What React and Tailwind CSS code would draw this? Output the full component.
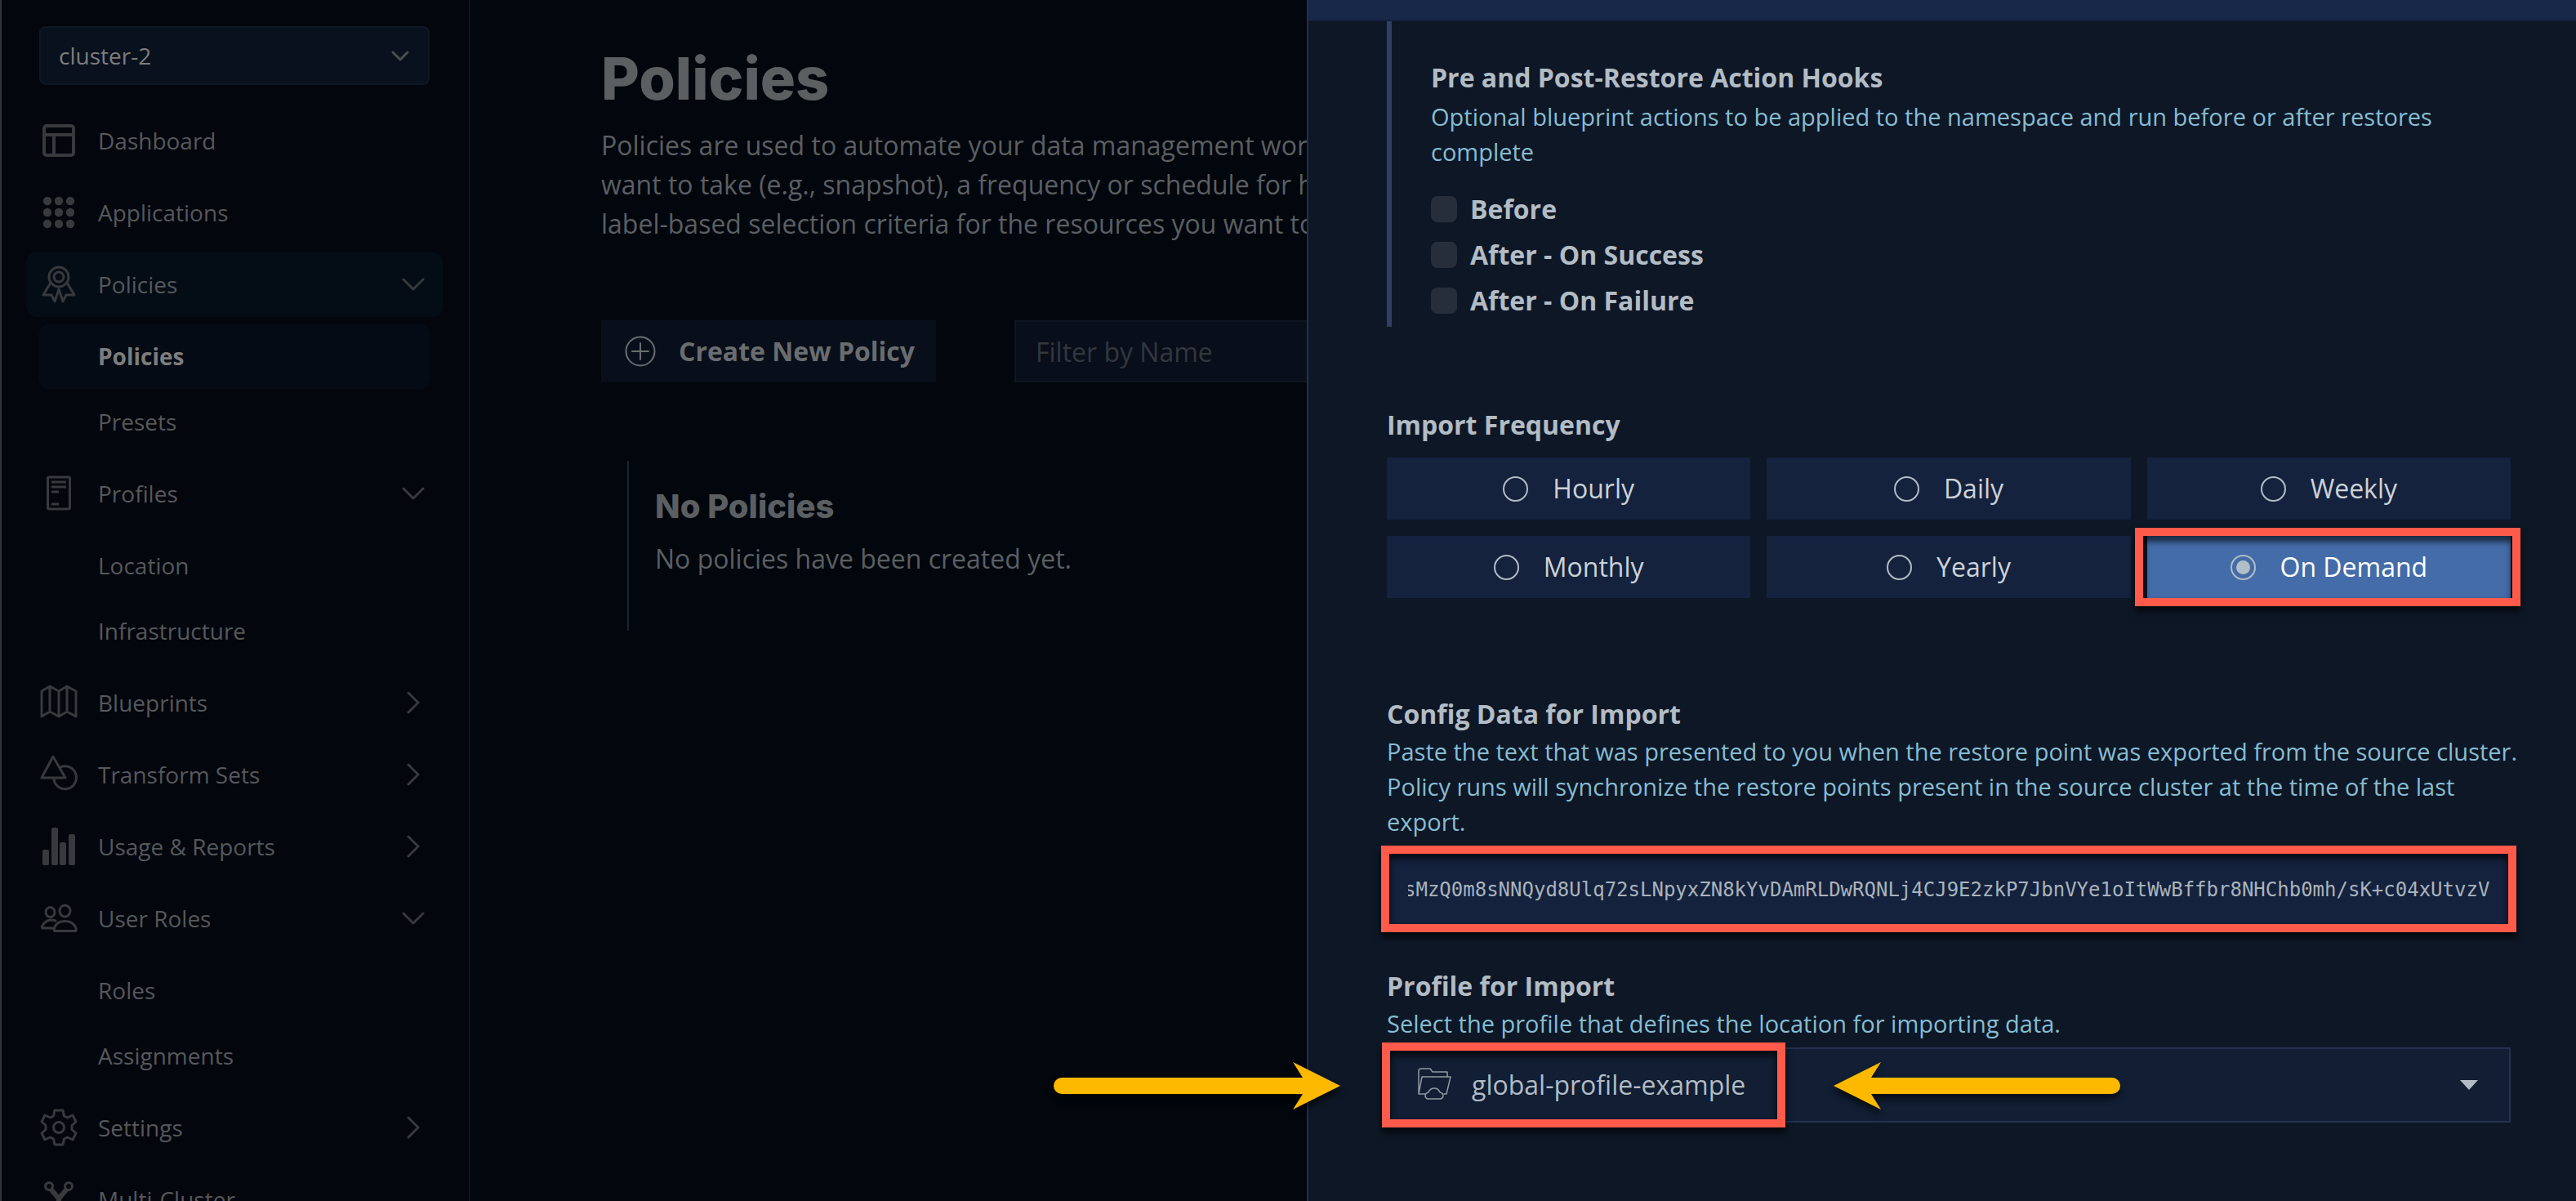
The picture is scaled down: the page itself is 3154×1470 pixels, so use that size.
import React, { useEffect, useRef } from "react";

const stroke = { fill: "none", stroke: "currentColor", strokeLinejoin: "round", strokeLinecap: "round" };

function Icon({ children, width = 3 }) {
  return (
    <svg viewBox="0 0 48 48" className="size-12 shrink-0" aria-hidden="true" {...stroke} strokeWidth={width}>
      {children}
    </svg>
  );
}

const DashboardIcon = () => (
  <Icon width={4}>
    <rect x="6" y="6" width="36" height="36" rx="3" />
    <path d="M6 17h36M18 17v25" />
  </Icon>
);

const AppsIcon = () => (
  <Icon>
    {[10, 24, 38].map((y) =>
      [10, 24, 38].map((x) => <circle key={`${x}-${y}`} cx={x} cy={y} r="5.2" fill="currentColor" stroke="none" />)
    )}
  </Icon>
);

const PolicyIcon = () => (
  <Icon>
    <circle cx="24" cy="15" r="12" />
    <circle cx="24" cy="15" r="6" />
    <path d="M14 22 5 37h10l4 8 5-15 5 15 4-8h10l-9-15" />
  </Icon>
);

const ProfileIcon = () => (
  <Icon>
    <rect x="10.5" y="4" width="27" height="39" rx="1.5" />
    <path strokeLinecap="butt" d="M15 10h18M15 16h18M15 22h9M15 37h9" />
  </Icon>
);

const BlueprintIcon = () => (
  <Icon>
    <path d="M3 10 13 4l11 6 10-6 11 6v31l-11-6-10 6-11-6-10 6zM13 4v31M24 10v31M34 4v31" />
  </Icon>
);

const TransformIcon = () => (
  <Icon>
    <path d="M17 2 3 28h29z" />
    <path d="M25.5 15.2A13.8 14 0 1 1 18 30" />
  </Icon>
);

const UsageIcon = () => (
  <Icon>
    <g fill="currentColor" stroke="none">
      <rect x="4" y="28" width="8" height="19" rx="2" />
      <rect x="15" y="1" width="8" height="46" rx="2" />
      <rect x="25" y="19" width="8" height="28" rx="2" />
      <rect x="36" y="9" width="8" height="38" rx="2" />
    </g>
  </Icon>
);

const UsersIcon = () => (
  <Icon>
    <ellipse cx="13.5" cy="16.5" rx="5.5" ry="6" />
    <ellipse cx="31.5" cy="15" rx="6.5" ry="7" />
    <path d="M16 36H4c-1-1-1-1.5 0-3 4-7 10-8 16-6" />
    <path d="M18.5 39.5c-1-1 0-12 13-12s14.5 11 13.5 12z" />
  </Icon>
);

const GearIcon = () => (
  <Icon>
    <path d="M19 3h10l1.5 7 4 2 6.5-3 4 8-5 4.5v5l5 4.5-4 8-6.5-3-4 2-1.5 7H19l-1.5-7-4-2L7 39l-4-8 5-4.5v-5L3 17l4-8 6.5 3 4-2z" />
    <circle cx="24" cy="24" r="6.5" />
  </Icon>
);

const ClusterIcon = () => (
  <Icon>
    <circle cx="12" cy="8" r="4.5" />
    <circle cx="36" cy="8" r="4.5" />
    <path strokeWidth="6" d="M15.5 13 24 23l8.5-10M24 23v12" />
    <circle cx="24" cy="40" r="4.5" />
  </Icon>
);

function Chevron({ open }) {
  return (
    <svg viewBox="0 0 32 32" className="size-8 shrink-0" aria-hidden="true" {...stroke} strokeWidth="3">
      <path d={open ? "M4 10 16 22 28 10" : "M10 4 22 16 10 28"} />
    </svg>
  );
}

const nav = [
  { label: "Dashboard", icon: DashboardIcon },
  { label: "Applications", icon: AppsIcon },
  { label: "Policies", icon: PolicyIcon, open: true, active: true, items: ["Policies", "Presets"] },
  { label: "Profiles", icon: ProfileIcon, open: true, items: ["Location", "Infrastructure"] },
  { label: "Blueprints", icon: BlueprintIcon, open: false },
  { label: "Transform Sets", icon: TransformIcon, open: false },
  { label: "Usage & Reports", icon: UsageIcon, open: false },
  { label: "User Roles", icon: UsersIcon, open: true, items: ["Roles", "Assignments"] },
  { label: "Settings", icon: GearIcon, open: false },
  { label: "Multi-Cluster", icon: ClusterIcon },
];

function NavGroup({ item }) {
  const Glyph = item.icon;
  return (
    <li className="flex flex-col gap-2">
      <a
        href="#"
        className={`flex h-20 items-center rounded-xl pr-5 pl-4 text-[#55585b] ${item.active ? "bg-[#040c15]" : ""}`}
      >
        <span className="text-[#37393d]">
          <Glyph />
        </span>
        <span className="ml-6 flex-1">{item.label}</span>
        {item.open !== undefined && (
          <span className="text-[#37393d]">
            <Chevron open={item.open} />
          </span>
        )}
      </a>
      {item.items && (
        <ul>
          {item.items.map((name) => (
            <li key={name} className="px-4">
              <a
                href="#"
                className={`flex h-20 items-center rounded-xl pl-[72px] ${
                  name === "Policies" ? "bg-[#040b14] font-bold text-[#7d7d7d]" : "text-[#55585b]"
                }`}
              >
                {name}
              </a>
            </li>
          ))}
        </ul>
      )}
    </li>
  );
}

function Sidebar() {
  return (
    <aside className="w-[576px] shrink-0 border-r-2 border-l-2 border-r-[#0c1420] border-l-[#333538] bg-[#03060d] text-[28px]">
      <div className="relative mt-8 mr-12 ml-[46px] text-[#7d7d7d]">
        <select
          aria-label="Cluster"
          className="h-[72px] w-full appearance-none rounded-lg border-2 border-[#0e1724] bg-[#0a111e] px-[22px]"
        >
          <option>cluster-2</option>
        </select>
        <svg
          viewBox="0 0 24 24"
          className="pointer-events-none absolute top-6 right-6 size-6 text-[#4a4d52]"
          aria-hidden="true"
          {...stroke}
          strokeWidth="3"
        >
          <path d="M3 8 12 17 21 8" />
        </svg>
      </div>
      <nav className="mt-7 pr-8 pl-[30px]">
        <ul className="flex flex-col gap-2">
          {nav.map((item) => (
            <NavGroup key={item.label} item={item} />
          ))}
        </ul>
      </nav>
    </aside>
  );
}

function Main() {
  return (
    <main className="min-w-0 flex-1 overflow-hidden bg-[#02060d] pl-40 text-[32px] leading-[48px] text-[#5b5f62]">
      <h1 className="mt-12 font-[Inter] text-[72px] leading-24 font-extrabold">Policies</h1>
      <p className="mt-2.5 whitespace-nowrap">
        Policies are used to automate your data management work
        <br />
        want to take (e.g., snapshot), a frequency or schedule for ho
        <br />
        label-based selection criteria for the resources you want to
      </p>
      <div className="mt-[94px] flex gap-24">
        <button className="flex h-[76px] shrink-0 items-center gap-[27px] bg-[#080f1b] pr-[26px] pl-7 font-bold text-[#6a6d70]">
          <svg viewBox="0 0 40 40" className="size-10" aria-hidden="true" {...stroke} strokeWidth="2">
            <circle cx="20" cy="20" r="17.5" />
            <path d="M20 10v20M10 20h20" />
          </svg>
          Create New Policy
        </button>
        <input
          type="text"
          aria-label="Filter by Name"
          placeholder="Filter by Name"
          className="h-[76px] min-w-0 flex-1 border-y-2 border-l-2 border-[#0f1620] bg-[#080e1a] px-6 placeholder:text-[#33373d]"
        />
      </div>
      <section className="mt-24 ml-8 flex h-[208px] flex-col justify-center border-l-2 border-[#17242c] pb-8 pl-8">
        <h2 className="font-[Inter] text-[40px] font-extrabold">No Policies</h2>
        <p className="mt-4">No policies have been created yet.</p>
      </section>
    </main>
  );
}

const frequencies = ["Hourly", "Daily", "Weekly", "Monthly", "Yearly", "On Demand"];
const configData =
  "sMzQ0m8sNNQyd8Ulq72sLNpyxZN8kYvDAmRLDwRQNLj4CJ9E2zkP7JbnVYe1oItWwBffbr8NHChb0mh/sK+c04xUtvzV";

function Highlight({ className }) {
  return (
    <div
      className={`pointer-events-none absolute border-10 border-[#ff5a4a] drop-shadow-[0_6px_4px_rgba(0,0,0,0.75)] ${className}`}
    />
  );
}

function Arrow({ className }) {
  return (
    <svg
      viewBox="0 0 351 60"
      className={`pointer-events-none absolute h-[60px] w-[351px] overflow-visible drop-shadow-[0_6px_4px_rgba(0,0,0,0.6)] ${className}`}
      aria-hidden="true"
    >
      <path fill="#fdb900" d="M10 20H305L293 1 351 30 293 59 305 40H10A10 10 0 0 1 10 20Z" />
    </svg>
  );
}

function FieldHead({ id, title, children }) {
  return (
    <>
      <label htmlFor={id} className="block font-bold text-[#b2bcc5]">
        {title}
      </label>
      <p className="-mr-5 text-[29px] leading-[43px] text-[#86bdd2]">{children}</p>
    </>
  );
}

function ConfigInput() {
  const ref = useRef(null);
  useEffect(() => {
    ref.current.scrollLeft = ref.current.scrollWidth;
  }, []);
  return (
    <input
      ref={ref}
      id="config-data"
      type="text"
      defaultValue={configData}
      className="h-[92px] w-full border-2 border-[#1d2c48] bg-[#14223e] px-6 font-['DejaVu_Sans_Mono',monospace] text-2xl text-[#a9b3bb]"
    />
  );
}

function Drawer() {
  return (
    <aside className="w-[1554px] shrink-0 overflow-hidden border-l-2 border-[#22304f] bg-[#0e1726] text-[32px] leading-[48px]">
      <div className="h-[26px] border-b-2 border-[#15213d] bg-[#182849]" />
      <div className="pr-20 pl-24">
        <section className="border-l-6 border-[#2f4063] pt-[45px] pb-4 pl-12">
          <h2 className="font-bold text-[#b2bcc5]">Pre and Post-Restore Action Hooks</h2>
          <p className="mt-0.5 text-[29px] leading-[43px] text-[#86bdd2]">
            Optional blueprint actions to be applied to the namespace and run before or after restores complete
          </p>
          <div className="mt-[33px] flex flex-col gap-6">
            {["Before", "After - On Success", "After - On Failure"].map((name) => (
              <label key={name} className="flex items-center gap-4 leading-8 font-bold text-[#b2bcc5]">
                <input type="checkbox" className="size-8 appearance-none rounded-lg bg-[#262e3c]" />
                {name}
              </label>
            ))}
          </div>
        </section>

        <fieldset className="mt-24">
          <legend className="font-bold text-[#b2bcc5]">Import Frequency</legend>
          <div className="relative mt-4 grid grid-cols-3 gap-5">
            {frequencies.map((name) => (
              <label
                key={name}
                className="flex h-[76px] items-center justify-center gap-[30px] bg-[#14223e] text-[#ccd2d8] has-checked:bg-[#446ca8] has-checked:text-white"
              >
                <input
                  type="radio"
                  name="frequency"
                  defaultChecked={name === "On Demand"}
                  className="size-[31px] appearance-none rounded-full border-2 border-[#b2bcc5] bg-clip-content p-[5px] checked:bg-[#b2bec8]"
                />
                {name}
              </label>
            ))}
            <Highlight className="top-[86px] -right-3 h-24 w-[472px]" />
          </div>
        </fieldset>

        <section className="mt-[118px]">
          <FieldHead id="config-data" title="Config Data for Import">
            Paste the text that was presented to you when the restore point was exported from the source cluster. Policy
            runs will synchronize the restore points present in the source cluster at the time of the last export.
          </FieldHead>
          <div className="relative mt-4">
            <ConfigInput />
            <Highlight className="-inset-x-[7px] -top-2 h-[106px]" />
          </div>
        </section>

        <section className="mt-12">
          <FieldHead id="profile" title="Profile for Import">
            Select the profile that defines the location for importing data.
          </FieldHead>
          <div className="relative mt-2">
            <select
              id="profile"
              className="h-[92px] w-full appearance-none border-2 border-[#24324e] bg-[#111e33] pl-[102px] text-[#b2bcc5]"
            >
              <option>global-profile-example</option>
            </select>
            <svg
              viewBox="0 0 42 42"
              className="pointer-events-none absolute top-6 left-[37px] size-[42px] text-[#8f99a3]"
              aria-hidden="true"
              {...stroke}
              strokeWidth="1.5"
            >
              <path d="M10 33H2V5q0-3 3-3h11l3 4h18v6M2 33 6 12h35l-5 21h-3" />
              <path d="M13 39q-3-1-3-4t4-4q2-5 7-5t7 5q4 1 4 4t-3 4z" />
            </svg>
            <svg viewBox="0 0 22 12" className="pointer-events-none absolute top-10 right-10 h-3 w-[22px]" aria-hidden="true">
              <path d="M0 0h22L11 12z" fill="#b2bcc5" />
            </svg>
            <Highlight className="-top-1.5 -left-1.5 h-[104px] w-[494px]" />
          </div>
        </section>
      </div>
    </aside>
  );
}

export default function App() {
  return (
    <div className="relative flex h-screen overflow-hidden bg-[#02060d] font-['Open_Sans',sans-serif]">
      <Sidebar />
      <Main />
      <Drawer />
      <Arrow className="right-[1513px] bottom-[111px]" />
      <Arrow className="right-[558px] bottom-[111px] -scale-x-100" />
    </div>
  );
}
